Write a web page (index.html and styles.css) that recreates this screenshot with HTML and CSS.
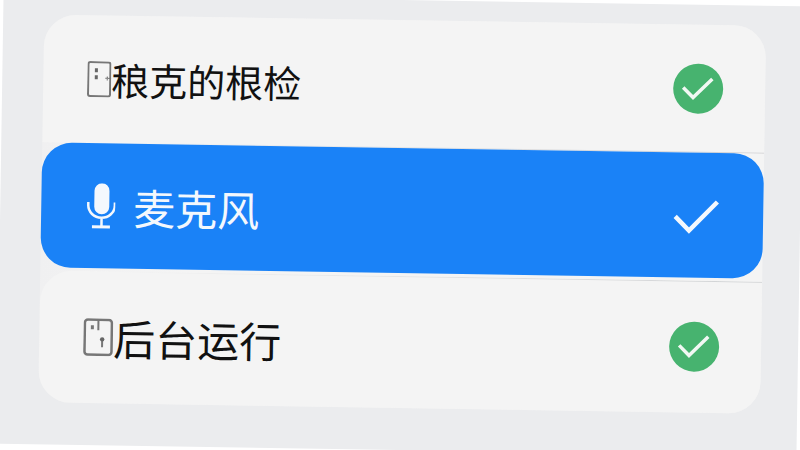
FILE: index.html
```html
<!DOCTYPE html>
<html lang="zh-CN">
<head>
<meta charset="utf-8">
<meta name="viewport" content="width=device-width, initial-scale=1">
<title>权限</title>
<link rel="stylesheet" href="styles.css">
</head>
<body>
<main class="screen">
  <div class="card">
    <label class="row row-first">
      <svg class="icon" width="24" height="36" viewBox="0 0 24 36" fill="none" stroke="#777" stroke-width="2">
        <rect x="1" y="1" width="22" height="34" rx="2"/>
        <path d="M9 7v4M9 14v4" stroke="#666" stroke-width="3"/>
        <path d="M18 17h6M20 15v4" stroke-width="1"/>
      </svg>
      <span class="text text-small">稂克的根检</span>
      <span class="tick">
        <input type="checkbox" class="box box-green" checked>
        <svg class="mark" viewBox="0 0 50 50" fill="none" stroke="#f1f8f3" stroke-width="3.5"><path d="M10 24l10 10 19-19"/></svg>
      </span>
    </label>
    <label class="row row-active">
      <svg class="icon" width="30" height="46" viewBox="0 0 30 46" fill="none" stroke="#f4f8fd" stroke-width="2.5">
        <rect x="9" y="0" width="15" height="31" rx="7.5" fill="#f4f8fd" stroke="none"/>
        <path d="M3 19v3a13.3 12.5 0 0 0 26.6 0v-3M16.500 35v8"/>
        <path d="M7 43.500h18" stroke-width="3"/>
      </svg>
      <span class="text text-spaced">麦克风</span>
      <span class="tick">
        <input type="checkbox" class="box" checked>
        <svg class="mark" viewBox="0 0 50 50" fill="none" stroke="#f4f8fd" stroke-width="4.500"><path d="M4 26l14 14 28-29"/></svg>
      </span>
    </label>
    <label class="row row-last">
      <svg class="icon" width="30" height="38" viewBox="0 0 30 38" fill="none" stroke="#777" stroke-width="2.500">
        <rect x="1.500" y="1.500" width="27" height="35" rx="3"/>
        <path d="M9 7v4" stroke-width="3"/>
        <path d="M15 2v10M19 21v8" stroke-width="2"/>
        <circle cx="19" cy="21" r="2.200" fill="#666" stroke="none"/>
      </svg>
      <span class="text">后台运行</span>
      <span class="tick">
        <input type="checkbox" class="box box-green" checked>
        <svg class="mark" viewBox="0 0 50 50" fill="none" stroke="#f1f8f3" stroke-width="3.5"><path d="M10 24l10 10 19-19"/></svg>
      </span>
    </label>
  </div>
</main>
</body>
</html>
```
FILE: styles.css
```css
* {
  box-sizing: border-box;
}

body {
  margin: 0;
  overflow: hidden;
  background: #fff;
  font-family: "Noto Sans CJK SC", sans-serif;
}

.screen {
  min-height: 100vh;
  padding: 20px 37px 42px 41px;
  background: #ebecee;
  transform: rotate(0.9deg);
}

.card {
  border-radius: 32px;
  background: linear-gradient(90deg, #f0f0f1, #f4f4f4 20%);
}

.row {
  display: flex;
  align-items: center;
  min-height: 128px;
  padding: 0 42px 0 44px;
  background: #f4f4f4;
  color: #111;
}

.row-first {
  border-radius: 32px 32px 0 0;
  background: linear-gradient(90deg, #f4f4f4 10%, #d0d0d2) bottom / 100% 1px no-repeat #f4f4f4;
}

.row-active {
  min-height: 125px;
  border-radius: 30px;
  background: #1a82f7;
  color: #f4f8fd;
}

.row-last {
  min-height: 132px;
  margin-top: 3px;
  border-radius: 32px 0 32px 32px;
  background: linear-gradient(90deg, #f4f4f4 10%, #d0d2d4) top / 100% 1px no-repeat #f4f4f4;
}

.icon {
  flex: none;
}

.text {
  font-size: 42px;
  line-height: 56px;
}

.text-small {
  font-size: 38px;
}

.text-spaced {
  margin-left: 18px;
}

.tick {
  display: grid;
  width: 50px;
  height: 50px;
  margin-left: auto;
}

.box,
.mark {
  grid-area: 1 / 1;
  width: 100%;
  height: 100%;
  margin: 0;
}

.box {
  appearance: none;
  border-radius: 50%;
}

.box-green {
  background: #47b36f;
}

.mark {
  z-index: 1;
  pointer-events: none;
}
```
